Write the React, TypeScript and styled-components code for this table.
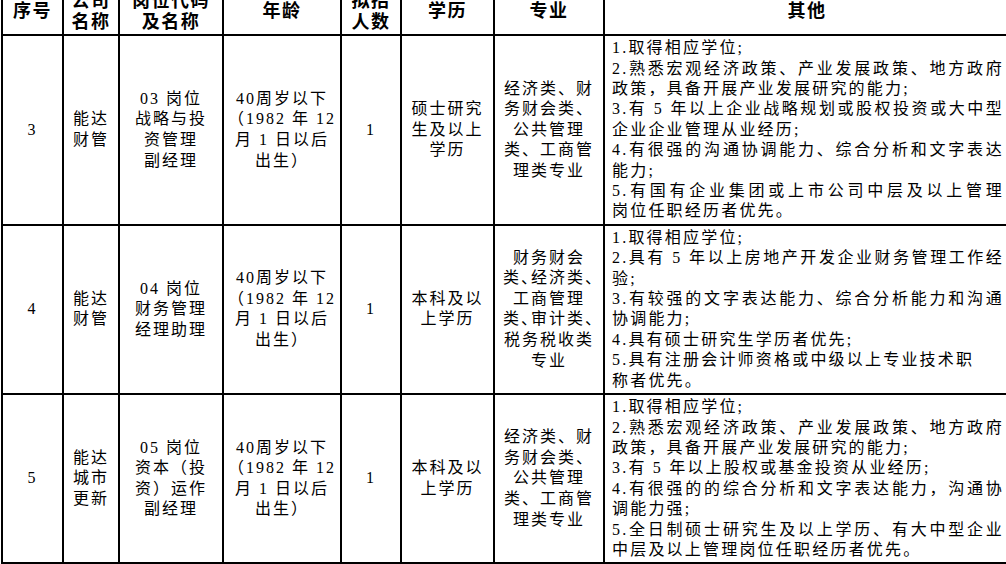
import React from 'react';
import styled, { createGlobalStyle } from 'styled-components';

const GlobalStyle = createGlobalStyle`
  html, body {
    margin: 0;
    padding: 0;
    background: #fff;
    overflow: hidden;
  }
  body {
    font-family: "Liberation Serif", "Noto Sans CJK SC", serif;
    color: #000;
  }
`;

type OtherLine = { t: string; j?: boolean };

type Row = {
    no: string;
    company: string[];
    post: string[];
    age: string[];
    count: string;
    edu: string[];
    major: React.ReactNode[];
    other: OtherLine[];
};

// wrapped line inside a paragraph -> stretched to the cell edge
const J = (t: string): OtherLine => ({ t, j: true });
const L = (t: string): OtherLine => ({ t });

const Halt = styled.span`
  font-feature-settings: "halt";
`;

const age = ['40周岁以下', '（1982 年 12', '月 1 日以后', '出生）'];
const majorEco = ['经济类、财', '务财会类、', '公共管理', '类、工商管', '理类专业'];

const rows: Row[] = [
    {
        no: '3',
        company: ['能达', '财管'],
        post: ['03 岗位', '战略与投', '资管理', '副经理'],
        age,
        count: '1',
        edu: ['硕士研究', '生及以上', '学历'],
        major: majorEco,
        other: [
            L('1.取得相应学位;'),
            J('2.熟悉宏观经济政策、产业发展政策、地方政府'),
            L('政策，具备开展产业发展研究的能力;'),
            J('3.有 5 年以上企业战略规划或股权投资或大中型'),
            L('企业企业管理从业经历;'),
            J('4.有很强的沟通协调能力、综合分析和文字表达'),
            L('能力;'),
            J('5.有国有企业集团或上市公司中层及以上管理'),
            L('岗位任职经历者优先。'),
        ],
    },
    {
        no: '4',
        company: ['能达', '财管'],
        post: ['04 岗位', '财务管理', '经理助理'],
        age,
        count: '1',
        edu: ['本科及以', '上学历'],
        major: [
            '财务财会',
            <>类<Halt>、</Halt>经济类<Halt>、</Halt></>,
            '工商管理',
            <>类<Halt>、</Halt>审计类<Halt>、</Halt></>,
            '税务税收类',
            '专业',
        ],
        other: [
            L('1.取得相应学位;'),
            J('2.具有 5 年以上房地产开发企业财务管理工作经'),
            L('验;'),
            J('3.有较强的文字表达能力、综合分析能力和沟通'),
            L('协调能力;'),
            L('4.具有硕士研究生学历者优先;'),
            L('5.具有注册会计师资格或中级以上专业技术职'),
            L('称者优先。'),
        ],
    },
    {
        no: '5',
        company: ['能达', '城市', '更新'],
        post: ['05 岗位', '资本（投', '资）运作', '副经理'],
        age,
        count: '1',
        edu: ['本科及以', '上学历'],
        major: majorEco,
        other: [
            L('1.取得相应学位;'),
            J('2.熟悉宏观经济政策、产业发展政策、地方政府'),
            L('政策，具备开展产业发展研究的能力;'),
            L('3.有 5 年以上股权或基金投资从业经历;'),
            J('4.有很强的的综合分析和文字表达能力，沟通协'),
            L('调能力强;'),
            J('5.全日制硕士研究生及以上学历、有大中型企业'),
            L('中层及以上管理岗位任职经历者优先。'),
        ],
    },
];

const headers: { label: string[] }[] = [
    { label: ['序号'] },
    { label: ['公司', '名称'] },
    { label: ['岗位代码', '及名称'] },
    { label: ['年龄'] },
    { label: ['拟招', '人数'] },
    { label: ['学历'] },
    { label: ['专业'] },
    { label: ['其他'] },
];

const widths = [61, 56, 104, 118, 60, 93, 110, 406];

const Stack = (lines: React.ReactNode[]) =>
    lines.map((l, i) => <Line key={i}>{l}</Line>);

const App = () => {
    return (
        <>
            <GlobalStyle/>
            <Table>
                <colgroup>
                    {widths.map((w, i) => <Col key={i} $w={w}/>)}
                </colgroup>
                <thead>
                <tr>
                    {headers.map((h, i) => (
                        <HeadCell key={i}>{Stack(h.label)}</HeadCell>
                    ))}
                </tr>
                </thead>
                <tbody>
                {rows.map(r => (
                    <tr key={r.no}>
                        <Cell>{r.no}</Cell>
                        <Cell>{Stack(r.company)}</Cell>
                        <Cell>{Stack(r.post)}</Cell>
                        <Cell>{Stack(r.age)}</Cell>
                        <Cell>{r.count}</Cell>
                        <Cell>{Stack(r.edu)}</Cell>
                        <Cell $tight>{Stack(r.major)}</Cell>
                        <OtherCell>
                            {r.other.map((l, i) => (
                                <Line key={i} $fill={l.j}>{l.t}</Line>
                            ))}
                        </OtherCell>
                    </tr>
                ))}
                </tbody>
            </Table>
        </>
    );
};
export default App;

const Table = styled.table`
  border-collapse: collapse;
  table-layout: fixed;
  width: 1008px;
  margin: -13px 0 0 1px;
`;

const Col = styled.col<{ $w: number }>`
  width: ${p => p.$w}px;
`;

const HeadCell = styled.th`
  border: 2px solid #000;
  padding: 2px 2px;
  vertical-align: middle;
  text-align: center;
  font-size: 18px;
  font-weight: 700;
  line-height: 20.6px;
  letter-spacing: 1.5px;
`;

const Cell = styled.td<{ $tight?: boolean }>`
  border: 2px solid #000;
  padding: 2px ${p => (p.$tight ? 1 : 3)}px;
  vertical-align: middle;
  text-align: center;
  font-size: 16px;
  line-height: 20.6px;
  letter-spacing: 2px;
  white-space: nowrap;
`;

const OtherCell = styled.td`
  border: 2px solid #000;
  padding: 2px 5px 2px 7px;
  vertical-align: middle;
  text-align: left;
  font-size: 16px;
  line-height: 20.4px;
  letter-spacing: 2.2px;
`;

const Line = styled.div<{ $fill?: boolean }>`
  display: block;
  text-align: ${p => (p.$fill ? 'justify' : 'inherit')};
  text-align-last: ${p => (p.$fill ? 'justify' : 'auto')};
`;
